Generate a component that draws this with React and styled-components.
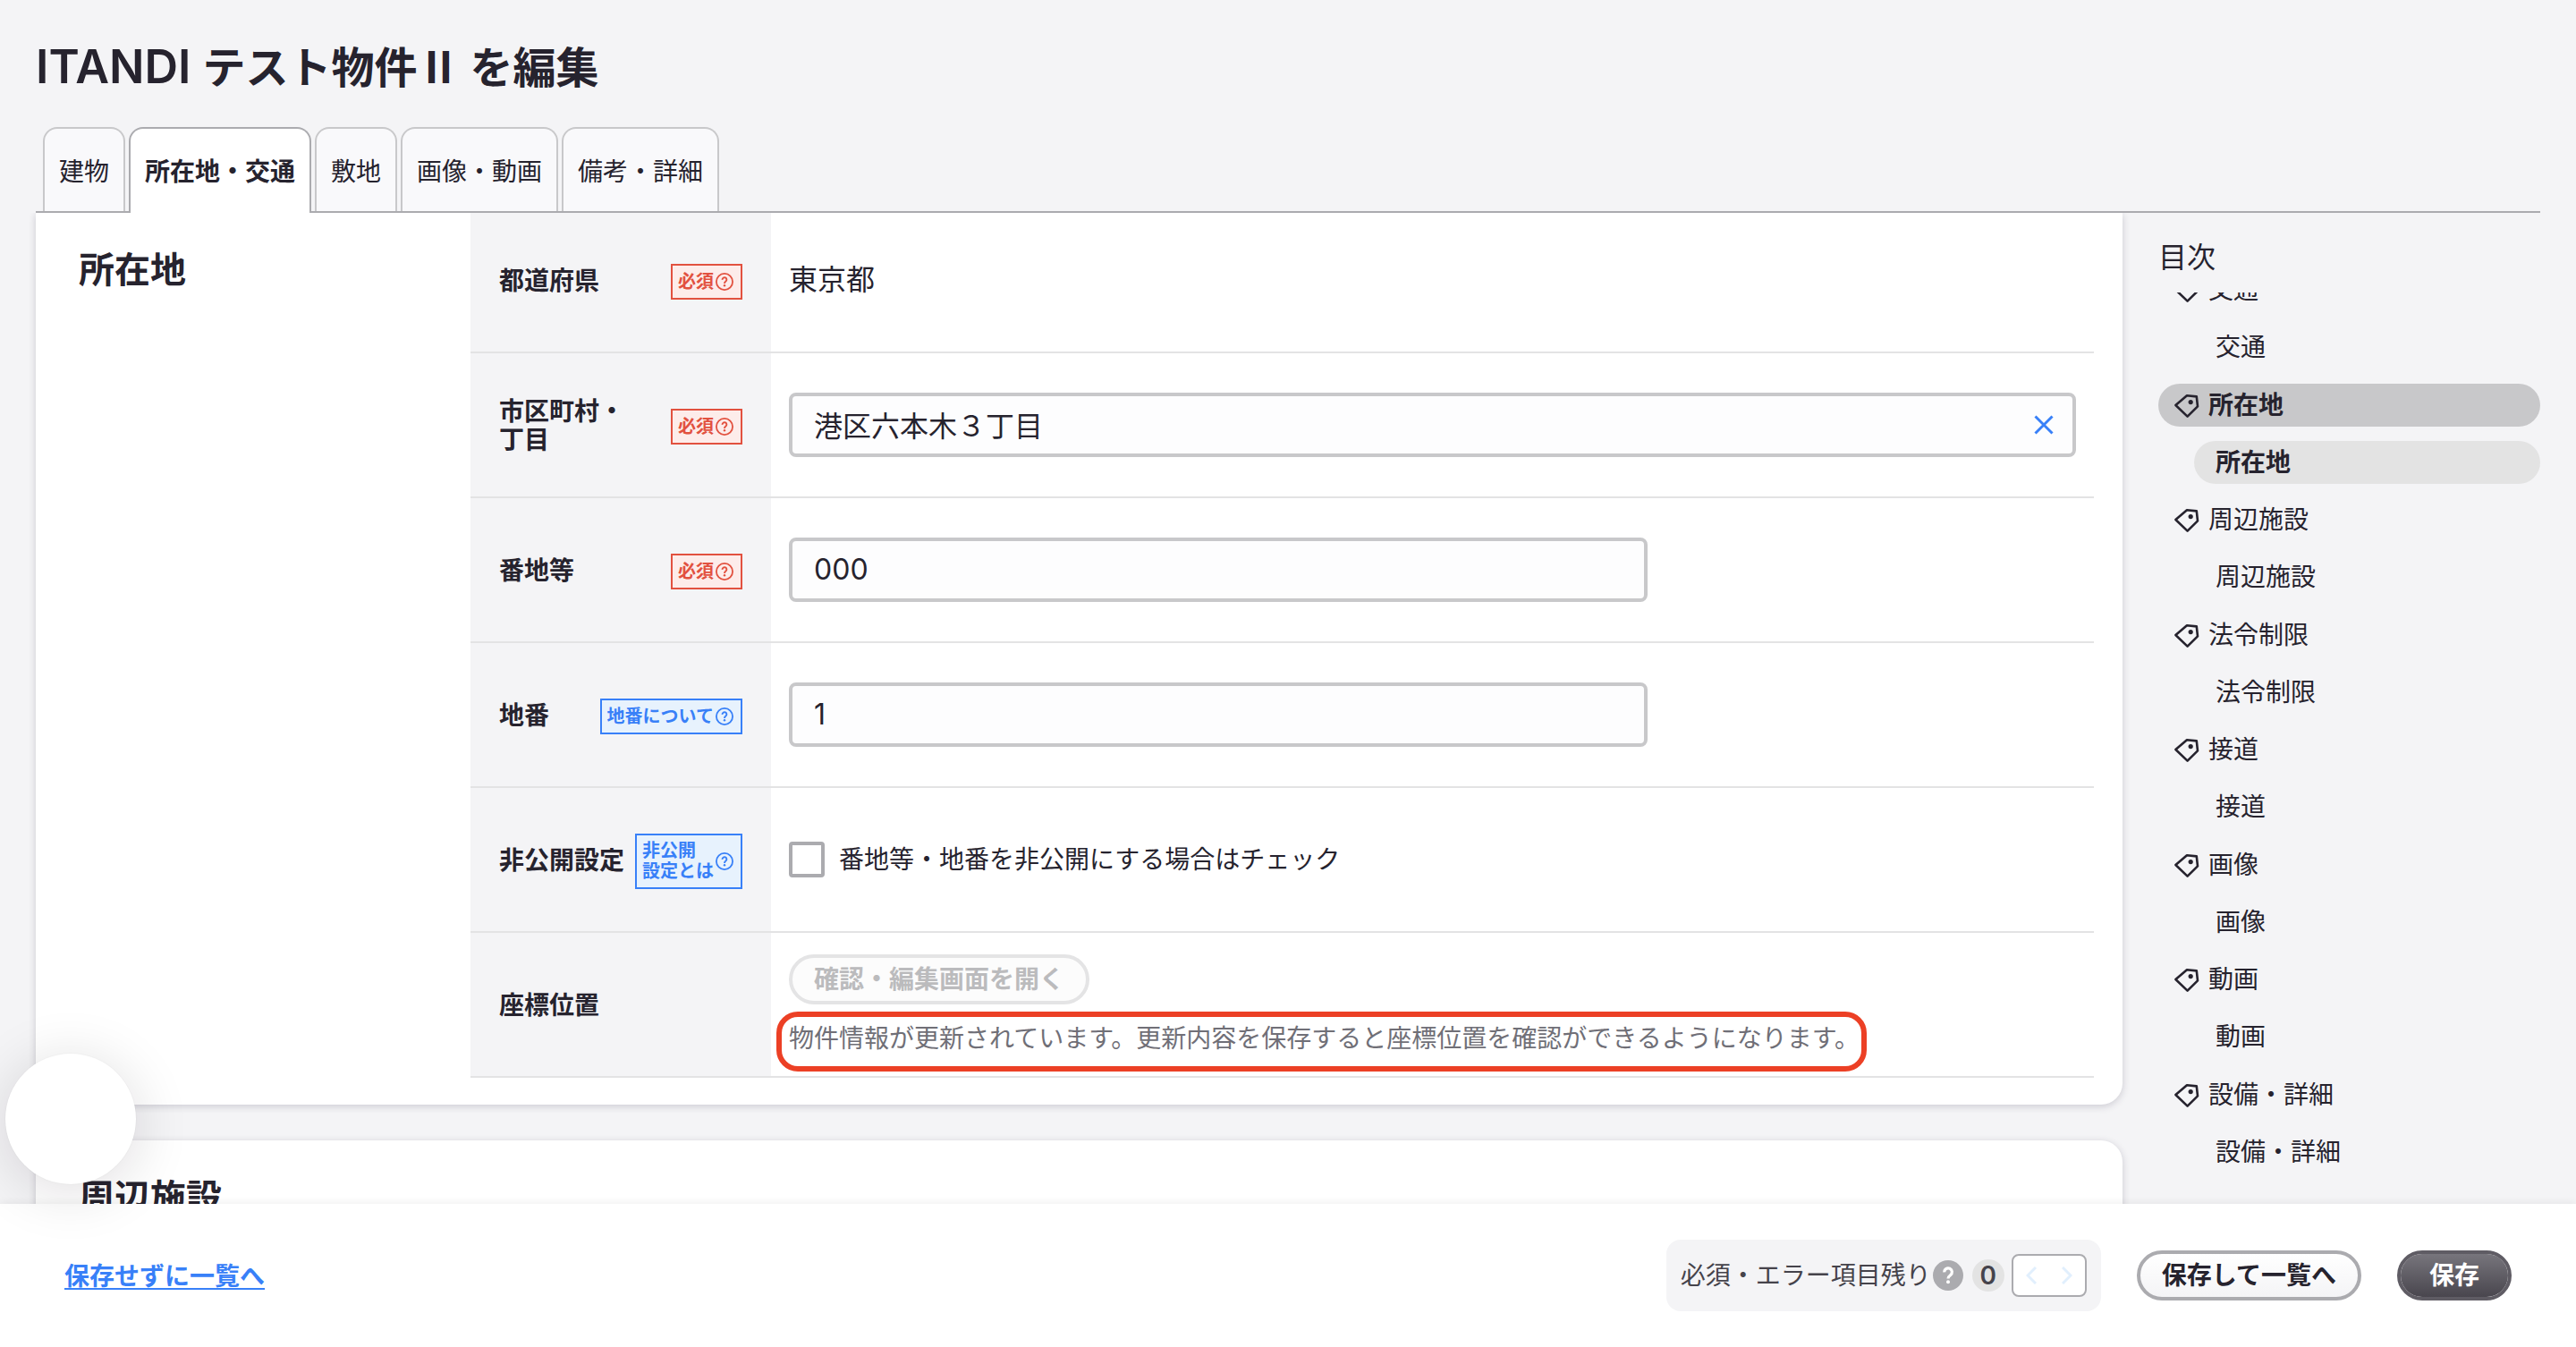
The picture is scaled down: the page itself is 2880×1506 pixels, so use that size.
import React, { useState } from 'react';
import styled, { createGlobalStyle, css } from 'styled-components';

const GlobalStyle = createGlobalStyle`
  * {
    box-sizing: border-box;
  }

  body {
    background: #f4f4f6;
    color: #26232e;
    font-family: Inter, 'Noto Sans CJK JP', sans-serif;
    font-size: 28px;
    line-height: 32px;
    margin: 0;
  }

  button,
  input {
    color: inherit;
    font: inherit;
    margin: 0;
  }

  h1,
  h2,
  p,
  ul {
    margin: 0;
    padding: 0;
  }
`;

const Page = styled.div`
  display: flex;
  flex-direction: column;
  height: 100vh;
  overflow: hidden;
`;

const Header = styled.header`
  padding: 0 40px;
`;

const Title = styled.h1`
  font-family: 'Noto Sans CJK JP', sans-serif;
  font-size: 48px;
  font-weight: 700;
  line-height: 64px;
  padding: 40px 0 38px;
`;

const Latin = styled.span`
  font-family: Inter, sans-serif;
  font-size: 52px;
  font-weight: 600;
  line-height: 1;
`;

const Tabs = styled.nav`
  border-bottom: #ababaf 2px solid;
  display: flex;
  gap: 4px;
  padding: 0 8px;
`;

const Tab = styled.button`
  background: #f9f9fb;
  border: #c8c8ca 2px solid;
  border-bottom: 0;
  border-radius: 16px 16px 0 0;
  height: 94px;
  padding: 4px 16px 0;

  ${({ $active }) =>
    $active &&
    css`
      background: #fff;
      border-color: #ababaf;
      font-weight: 700;
      height: 96px;
      margin-bottom: -2px;
      padding-bottom: 2px;
    `}
`;

const Body = styled.div`
  display: flex;
  flex: 1;
  min-height: 0;
`;

const Main = styled.main`
  display: flex;
  flex: 1;
  flex-direction: column;
  gap: 40px;
  overflow: hidden;
  padding: 0 40px;
`;

const Card = styled.section`
  background: #fff;
  border-radius: ${({ $scrolled }) => ($scrolled ? '0 0 24px 24px' : '24px')};
  box-shadow: 0 2px 8px rgba(38, 35, 64, 0.2);
  display: grid;
  flex-shrink: 0;
  grid-template-columns: 486px 1fr;
  min-height: 240px;
  padding: 0 32px 30px 0;
`;

const CardTitle = styled.h2`
  font-size: 40px;
  font-weight: 700;
  line-height: 48px;
  padding: 40px 48px;
`;

const Form = styled.form`
  margin-top: -5px;
`;

const Row = styled.div`
  border-bottom: #e3e3e4 2px solid;
  display: grid;
  grid-template-columns: 336px 1fr;
  min-height: 162px;
`;

const RowHead = styled.div`
  align-items: center;
  background: #f4f4f6;
  display: flex;
  justify-content: space-between;
  padding: 2px 32px 0;
`;

const Label = styled.label`
  font-weight: 700;
  white-space: pre-line;
`;

const RowBody = styled.div`
  align-items: flex-start;
  display: flex;
  flex-direction: column;
  gap: 16px;
  justify-content: center;
  padding: 0 20px;
`;

const Badge = styled.button`
  align-items: center;
  background: ${({ $required }) => ($required ? '#fdecea' : '#e7f2fd')};
  border: 2px solid;
  color: ${({ $required }) => ($required ? '#e2513f' : '#3880f8')};
  display: flex;
  font-size: 20px;
  font-weight: 700;
  gap: 2px;
  line-height: 23px;
  margin-top: 2px;
  min-height: 40px;
  padding: 6px 8px 6px 6px;
  text-align: left;
  white-space: pre-line;
`;

const Value = styled.p`
  font-size: 32px;
  line-height: 40px;
`;

const Field = styled.div`
  position: relative;
  width: ${({ $wide }) => ($wide ? '100%' : '960px')};
`;

const TextInput = styled.input`
  background: #fdfdfe;
  border: #c8c8ca 4px solid;
  border-radius: 8px;
  display: block;
  font-size: 32px;
  height: 72px;
  line-height: 40px;
  padding: 0 24px 2px;
  width: 100%;
`;

const ClearButton = styled.button`
  background: none;
  border: 0;
  color: #3880f8;
  height: 24px;
  padding: 0;
  position: absolute;
  right: 24px;
  top: 24px;
  width: 24px;

  svg {
    display: block;
  }
`;

const CheckLabel = styled.label`
  align-items: center;
  display: flex;
  gap: 16px;
`;

const Checkbox = styled.input`
  appearance: none;
  background: #fff;
  border: #ababaf 4px solid;
  border-radius: 4px;
  height: 40px;
  width: 40px;

  &:checked {
    background: #3880f8;
  }
`;

const PillButton = styled.button`
  background: linear-gradient(#fff, #f4f4f6);
  border: #ababaf 4px solid;
  border-radius: 28px;
  font-weight: 700;
  height: 56px;
  padding: 0 24px;

  &:disabled {
    background: #fcfcfc;
    border-color: #e4e4e5;
    color: #bbbbbd;
  }

  ${({ $primary }) =>
    $primary &&
    css`
      background: linear-gradient(#77757c, #49464e) padding-box;
      border-color: #5f5c64;
      color: #fff;
      padding: 0 32px;
    `}
`;

const Note = styled.p`
  color: #706f77;
  line-height: 36px;
  padding-top: 4px;
  position: relative;

  &::after {
    border: #ec4025 6px solid;
    border-radius: 24px;
    bottom: -19px;
    content: '';
    left: -14px;
    position: absolute;
    right: -8px;
    top: -8px;
  }
`;

const Side = styled.aside`
  display: flex;
  flex-direction: column;
  padding: 30px 40px 34px 0;
  width: 467px;
`;

const SideTitle = styled.h2`
  font-size: 32px;
  font-weight: 400;
  line-height: 40px;
  margin-bottom: 19px;
`;

const TocWindow = styled.nav`
  display: flex;
  flex: 1;
  flex-direction: column;
  min-height: 0;
  overflow: hidden;
`;

const Toc = styled.ul`
  display: flex;
  flex: 1;
  flex-direction: column;
  justify-content: space-between;
  list-style: none;
  margin-top: -27px;
`;

const TocLink = styled.a`
  align-items: center;
  border-radius: 24px;
  color: inherit;
  display: flex;
  gap: 8px;
  height: 48px;
  margin-left: ${({ $sub }) => ($sub ? '40px' : '0')};
  padding: 0 ${({ $sub }) => ($sub ? '24px' : '16px')};
  text-decoration: none;

  ${({ $active, $sub }) =>
    $active &&
    css`
      background: ${$sub ? '#e3e3e3' : '#c8c8ca'};
      font-weight: 700;
    `}
`;

const Footer = styled.footer`
  align-items: center;
  background: #fff;
  box-shadow: 0 -2px 8px rgba(0, 0, 0, 0.06);
  display: flex;
  gap: 40px;
  height: 160px;
  padding: 0 72px;
  position: relative;
`;

const BackLink = styled.a`
  color: #3880f8;
  font-weight: 700;
  margin-right: auto;
  padding-top: 2px;
  text-decoration-thickness: 2px;
  text-underline-offset: 3px;
`;

const Remaining = styled.div`
  align-items: center;
  background: #f4f4f6;
  border-radius: 16px;
  color: #45434b;
  display: flex;
  height: 80px;
  padding: 0 16px;
`;

const HelpButton = styled.button`
  background: #ababaf;
  border: 0;
  border-radius: 50%;
  color: #fff;
  height: 34px;
  margin: 0 10px 0 2px;
  padding: 0;
  width: 34px;

  svg {
    display: block;
  }
`;

const Count = styled.span`
  background: #e3e3e3;
  border-radius: 50%;
  font-size: 28px;
  font-weight: 600;
  height: 36px;
  line-height: 36px;
  margin-right: 8px;
  text-align: center;
  width: 36px;
`;

const Stepper = styled.div`
  background: #fff;
  border: #ababaf 2px solid;
  border-radius: 8px;
  display: flex;
  height: 48px;
  width: 84px;
`;

const StepButton = styled.button`
  background: none;
  border: 0;
  color: #e1effd;
  display: grid;
  flex: 1;
  padding: 0;
  place-items: center;
`;

const FloatingCircle = styled.div`
  background: #fff;
  border-radius: 50%;
  bottom: 182px;
  box-shadow: 0 8px 64px rgba(20, 0, 20, 0.14), 0 0 2px rgba(0, 0, 0, 0.08);
  height: 146px;
  left: 6px;
  position: fixed;
  width: 146px;
`;

const TagIcon = () => (
  <svg width="32" height="32" viewBox="0 0 32 32" fill="none" aria-hidden="true">
    <path
      d="M3.4 16L16 5.2L26.8 6.4L28 17.4L16.6 28.6Z"
      stroke="currentColor"
      strokeWidth="2.6"
      strokeLinejoin="round"
    />
    <circle cx="20.2" cy="12.6" r="2.6" fill="currentColor" />
  </svg>
);

const QuestionIcon = () => (
  <svg width="20" height="20" viewBox="0 0 20 20" fill="none" aria-hidden="true">
    <circle cx="10" cy="10" r="9.1" stroke="currentColor" strokeWidth="1.8" />
    <path
      d="M7.6 7.9A2.4 2.4 0 1 1 11.4 9.6C10.4 10.4 10 10.8 10 12"
      stroke="currentColor"
      strokeWidth="1.9"
    />
    <circle cx="10" cy="14.2" r="1.2" fill="currentColor" />
  </svg>
);

const HelpIcon = () => (
  <svg width="34" height="34" viewBox="0 0 34 34" fill="none" aria-hidden="true">
    <path
      d="M12.8 13.4A4.3 4.3 0 1 1 19.6 16.6C17.8 18 17 18.6 17 20.4"
      stroke="currentColor"
      strokeWidth="3.2"
    />
    <circle cx="17" cy="24.2" r="2" fill="currentColor" />
  </svg>
);

const CrossIcon = () => (
  <svg width="24" height="24" viewBox="0 0 24 24" fill="none" aria-hidden="true">
    <path d="M2.5 2.5L21.5 21.5M21.5 2.5L2.5 21.5" stroke="currentColor" strokeWidth="3" />
  </svg>
);

const Chevron = ({ d }) => (
  <svg width="12" height="20" viewBox="0 0 12 20" fill="none" aria-hidden="true">
    <path d={d} stroke="currentColor" strokeWidth="3" />
  </svg>
);

const tabs = ['建物', '所在地・交通', '敷地', '画像・動画', '備考・詳細'];

const toc = [
  '交通',
  '所在地',
  '周辺施設',
  '法令制限',
  '接道',
  '画像',
  '動画',
  '設備・詳細',
];

const FormRow = ({ label, htmlFor, badge, required, children }) => (
  <Row>
    <RowHead>
      <Label htmlFor={htmlFor}>{label}</Label>
      {badge && (
        <Badge type="button" $required={required}>
          {badge}
          <QuestionIcon />
        </Badge>
      )}
    </RowHead>
    <RowBody>{children}</RowBody>
  </Row>
);

const App = () => {
  const [town, setTown] = useState('港区六本木３丁目');

  return (
    <>
      <GlobalStyle />
      <Page>
        <Header>
          <Title>
            <Latin>ITANDI </Latin>
            テスト物件Ⅱ を編集
          </Title>
          <Tabs>
            {tabs.map(tab => (
              <Tab key={tab} type="button" $active={tab === '所在地・交通'}>
                {tab}
              </Tab>
            ))}
          </Tabs>
        </Header>

        <Body>
          <Main>
            <Card $scrolled>
              <CardTitle>所在地</CardTitle>
              <Form>
                <FormRow label="都道府県" badge="必須" required>
                  <Value>東京都</Value>
                </FormRow>
                <FormRow
                  label={'市区町村・\n丁目'}
                  htmlFor="town"
                  badge="必須"
                  required
                >
                  <Field $wide>
                    <TextInput
                      id="town"
                      value={town}
                      onChange={e => setTown(e.target.value)}
                    />
                    <ClearButton
                      type="button"
                      aria-label="クリア"
                      onClick={() => setTown('')}
                    >
                      <CrossIcon />
                    </ClearButton>
                  </Field>
                </FormRow>
                <FormRow label="番地等" htmlFor="address" badge="必須" required>
                  <Field>
                    <TextInput id="address" defaultValue="000" />
                  </Field>
                </FormRow>
                <FormRow label="地番" htmlFor="lot" badge="地番について">
                  <Field>
                    <TextInput id="lot" defaultValue="1" />
                  </Field>
                </FormRow>
                <FormRow
                  label="非公開設定"
                  htmlFor="private"
                  badge={'非公開\n設定とは'}
                >
                  <CheckLabel>
                    <Checkbox id="private" type="checkbox" />
                    番地等・地番を非公開にする場合はチェック
                  </CheckLabel>
                </FormRow>
                <FormRow label="座標位置" htmlFor="position">
                  <PillButton id="position" type="button" disabled>
                    確認・編集画面を開く
                  </PillButton>
                  <Note>
                    物件情報が更新されています。更新内容を保存すると座標位置を確認ができるようになります。
                  </Note>
                </FormRow>
              </Form>
            </Card>
            <Card>
              <CardTitle>周辺施設</CardTitle>
            </Card>
          </Main>

          <Side>
            <SideTitle>目次</SideTitle>
            <TocWindow>
              <Toc>
                {toc.map(item => (
                  <React.Fragment key={item}>
                    <li>
                      <TocLink href="#" $active={item === '所在地'}>
                        <TagIcon />
                        {item}
                      </TocLink>
                    </li>
                    <li>
                      <TocLink href="#" $sub $active={item === '所在地'}>
                        {item}
                      </TocLink>
                    </li>
                  </React.Fragment>
                ))}
              </Toc>
            </TocWindow>
          </Side>
        </Body>

        <Footer>
          <BackLink href="#">保存せずに一覧へ</BackLink>
          <Remaining>
            必須・エラー項目残り
            <HelpButton type="button" aria-label="ヘルプ">
              <HelpIcon />
            </HelpButton>
            <Count>0</Count>
            <Stepper>
              <StepButton type="button" aria-label="前へ">
                <Chevron d="M11 1L2 10L11 19" />
              </StepButton>
              <StepButton type="button" aria-label="次へ">
                <Chevron d="M1 1L10 10L1 19" />
              </StepButton>
            </Stepper>
          </Remaining>
          <PillButton type="button">保存して一覧へ</PillButton>
          <PillButton type="button" $primary>
            保存
          </PillButton>
        </Footer>
        <FloatingCircle />
      </Page>
    </>
  );
};

export default App;
